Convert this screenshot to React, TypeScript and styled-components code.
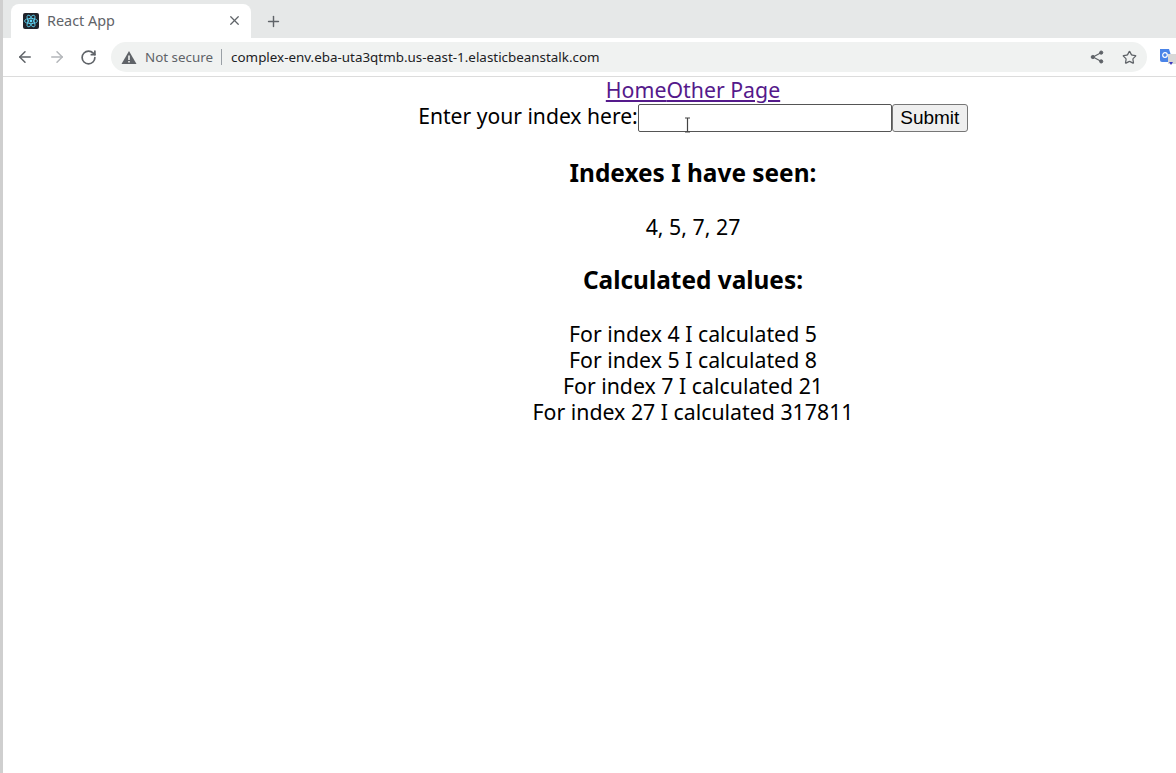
import styled, { createGlobalStyle } from 'styled-components';
import { ArrowLeft, ArrowRight, RotateCw, X, Plus, Star } from 'lucide-react';

const GlobalStyle = createGlobalStyle`
  html, body {
    margin: 0;
    height: 100%;
    overflow: hidden;
    background: #fff;
  }
`;

const Shell = styled.div`
  width: 1176px;
  height: 773px;
  box-sizing: border-box;
  border-left: 3px solid #cfcfcf;
  overflow: hidden;
  display: flex;
  flex-direction: column;
  position: relative;
  font-family: "Noto Sans", sans-serif;
`;

const TabStrip = styled.div`
  height: 38px;
  flex: none;
  background: #e6e8e8;
  display: flex;
  align-items: flex-end;
  padding-left: 8px;
`;

const Tab = styled.div`
  width: 240px;
  height: 34px;
  box-sizing: border-box;
  background: #fff;
  border-radius: 8px 8px 0 0;
  display: flex;
  align-items: center;
  padding: 0 9px 1px 12px;
  color: #5f6368;
  font-size: 14.4px;
`;

const Favicon = styled.svg`
  width: 16px;
  height: 16px;
  margin-right: 8px;
  flex: none;
`;

const TabTitle = styled.span`
  flex: 1;
`;

const NewTab = styled.div`
  margin-left: 14px;
  height: 34px;
  display: flex;
  align-items: center;
  color: #5f6368;
`;

const Toolbar = styled.div`
  height: 39px;
  flex: none;
  box-sizing: border-box;
  background: #fff;
  border-bottom: 1px solid #dcdcdc;
  display: flex;
  align-items: center;
  padding-left: 13px;
`;

const NavButton = styled.div<{ $off?: boolean }>`
  width: 32px;
  height: 24px;
  display: flex;
  align-items: center;
  color: ${(p) => (p.$off ? '#b4b7ba' : '#5f6368')};
`;

const Omnibox = styled.div`
  margin-left: -1px;
  width: 1036px;
  height: 30px;
  box-sizing: border-box;
  border-radius: 15px;
  background: #f0f2f1;
  display: flex;
  align-items: center;
  padding: 0 2px 0 10px;
  font-size: 13.4px;
`;

const WarningIcon = styled.svg`
  width: 16px;
  height: 15px;
  flex: none;
`;

const NotSecure = styled.span`
  color: #5f6368;
  margin-left: 8px;
`;

const Divider = styled.span`
  width: 1px;
  height: 16px;
  background: #9aa0a6;
  margin: 0 9px 0 8px;
`;

const Url = styled.span`
  color: #202124;
  flex: 1;
`;

const OmniIcon = styled.div`
  width: 32px;
  display: flex;
  justify-content: center;
  color: #5f6368;
`;

const Translate = styled.svg`
  width: 16px;
  height: 18px;
  position: absolute;
  left: 1157px;
  top: 48px;
`;

const Viewport = styled.div`
  flex: 1;
  overflow: hidden;
`;

const Page = styled.div`
  width: 1380px;
  text-align: center;
  color: #000;
  font-size: 21.3px;
  line-height: 26px;
`;

const NavLinks = styled.div`
  height: 27px;
`;

const PageLink = styled.a`
  color: #551a8b;
  text-decoration: underline;
`;

const IndexForm = styled.form`
  height: 30px;
  margin: 0;
  line-height: 24px;
`;

const IndexLabel = styled.label`
  font-size: 21.1px;
`;

const IndexInput = styled.input`
  width: 254px;
  height: 28px;
  box-sizing: border-box;
  border: 1px solid #555;
  border-radius: 2px;
  padding: 1px 2px;
  vertical-align: top;
  background: #fff;
`;

const SubmitButton = styled.button`
  width: 76px;
  height: 28px;
  box-sizing: border-box;
  border: 1px solid #767676;
  border-radius: 3px;
  background: #efefef;
  font-family: "Liberation Sans", sans-serif;
  font-size: 19px;
  padding: 0;
  vertical-align: top;
  color: #000;
`;

const Heading = styled.h3`
  font-size: 24.4px;
  line-height: 30px;
  margin: 24px 0 26px;
  font-weight: 700;
`;

const SeenList = styled.div`
  height: 27px;
`;

const ResultRow = styled.div``;

const Cursor = styled.svg`
  position: absolute;
  left: 681px;
  top: 117px;
  width: 7px;
  height: 16px;
`;

const seen = '4, 5, 7, 27';
const calculated: [number, number][] = [
  [4, 5],
  [5, 8],
  [7, 21],
  [27, 317811],
];

export default function App() {
  return (
    <Shell>
      <GlobalStyle />
      <TabStrip>
        <Tab>
          <Favicon viewBox="0 0 16 16">
            <rect width="16" height="16" rx="2" fill="#20232a" />
            <circle cx="8" cy="8" r="1.4" fill="#61dafb" />
            <g fill="none" stroke="#61dafb" strokeWidth="0.8">
              <ellipse cx="8" cy="8" rx="6.5" ry="2.6" />
              <ellipse cx="8" cy="8" rx="6.5" ry="2.6" transform="rotate(60 8 8)" />
              <ellipse cx="8" cy="8" rx="6.5" ry="2.6" transform="rotate(120 8 8)" />
            </g>
          </Favicon>
          <TabTitle>React App</TabTitle>
          <X size={15} strokeWidth={2} />
        </Tab>
        <NewTab>
          <Plus size={17} strokeWidth={2} />
        </NewTab>
      </TabStrip>
      <Toolbar>
        <NavButton>
          <ArrowLeft size={18} strokeWidth={2} />
        </NavButton>
        <NavButton $off>
          <ArrowRight size={18} strokeWidth={2} />
        </NavButton>
        <NavButton>
          <RotateCw size={17} strokeWidth={2.4} />
        </NavButton>
        <Omnibox>
          <WarningIcon viewBox="0 0 16 15">
            <path d="M8 1 15.5 14H.5z" fill="#5f6368" />
            <path d="M7.2 5.5h1.6v4.5H7.2zM7.2 11h1.6v1.6H7.2z" fill="#f0f2f1" />
          </WarningIcon>
          <NotSecure>Not secure</NotSecure>
          <Divider />
          <Url>complex-env.eba-uta3qtmb.us-east-1.elasticbeanstalk.com</Url>
          <OmniIcon>
            <svg width="14" height="14" viewBox="0 0 14 14">
              <g fill="#5f6368" stroke="#5f6368">
                <circle cx="11.2" cy="2.6" r="1.6" />
                <circle cx="2.8" cy="7" r="1.6" />
                <circle cx="11.2" cy="11.4" r="1.6" />
                <path d="M11 2.7 3 7l8 4.3" fill="none" strokeWidth="1.2" />
              </g>
            </svg>
          </OmniIcon>
          <OmniIcon>
            <Star size={15} strokeWidth={2} />
          </OmniIcon>
        </Omnibox>
        <Translate viewBox="0 0 16 18">
          <path d="M0 1h9l4 13H2a2 2 0 0 1-2-2z" fill="#4a84e8" />
          <circle cx="5" cy="7" r="2.3" fill="none" stroke="#fff" strokeWidth="1.2" />
          <rect x="8" y="6" width="8" height="10" fill="#d8d8d8" />
          <path d="M9 14h4l-2 3z" fill="#3c3cc0" />
        </Translate>
      </Toolbar>
      <Viewport>
        <Page>
          <NavLinks>
            <PageLink href="#">Home</PageLink>
            <PageLink href="#">Other Page</PageLink>
          </NavLinks>
          <IndexForm onSubmit={(e) => e.preventDefault()}>
            <IndexLabel>Enter your index here:</IndexLabel>
            <IndexInput />
            <SubmitButton>Submit</SubmitButton>
          </IndexForm>
          <Heading>Indexes I have seen:</Heading>
          <SeenList>{seen}</SeenList>
          <Heading>Calculated values:</Heading>
          {calculated.map(([index, value]) => (
            <ResultRow key={index}>
              For index {index} I calculated {value}
            </ResultRow>
          ))}
        </Page>
      </Viewport>
      <Cursor viewBox="0 0 7 16">
        <path d="M1 1h5M3.5 1v14M1 15h5" stroke="#444" strokeWidth="1.2" fill="none" />
      </Cursor>
    </Shell>
  );
}
